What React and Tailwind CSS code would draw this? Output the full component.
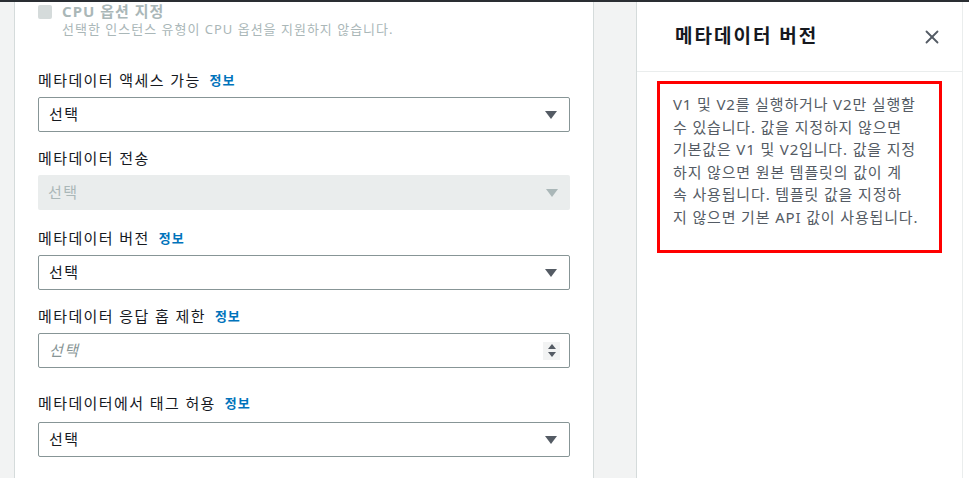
import { X } from 'lucide-react';

const Info = () => (
  <span className="ml-[9px] text-[13px] font-bold tracking-[1px] text-[#0073bb]">정보</span>
);

const Caret = ({ disabled }) => (
  <svg width="12" height="8" viewBox="0 0 12 8" className="shrink-0">
    <path d="M0 0 H12 L6 8 Z" fill={disabled ? '#aab7b8' : '#545b64'} />
  </svg>
);

const Select = ({ disabled }) => (
  <div
    className={`h-[35px] flex items-center justify-between pl-[10px] pr-[12px] rounded-[2px] ${
      disabled ? 'bg-[#eaeded] text-[#aab7b8]' : 'bg-white border border-[#879596] text-[#16191f]'
    }`}
  >
    <span className="text-[15px] tracking-[1.4px]">선택</span>
    <Caret disabled={disabled} />
  </div>
);

const Field = ({ label, info, className, gap = 'mt-[7px]', children }) => (
  <div className={className}>
    <div className="h-[20px] leading-[20px] text-[15px] tracking-[1.4px] text-[#16191f] flex items-center">
      <span>{label}</span>
      {info && <Info />}
    </div>
    <div className={gap}>{children}</div>
  </div>
);

export default function App() {
  return (
    <div className="w-[969px] h-[478px] overflow-hidden flex flex-col bg-[#f2f3f3] font-['Noto_Sans','Noto_Sans_CJK_KR',sans-serif]">
      <div className="h-[2px] bg-[#2a2e33] shrink-0" />
      <div className="flex flex-1 min-h-0">
        <div className="w-[14px] shrink-0" />

        {/* Form panel */}
        <div className="w-[580px] shrink-0 bg-white border-x border-[#d5dbdb] px-[23px]">
          <div className="flex items-start gap-[10px] pt-[2px]">
            <div className="w-[14px] h-[14px] mt-[1px] rounded-[2px] bg-[#d5dbdb]" />
            <div>
              <div className="text-[15px] font-bold leading-[14px] tracking-[1px] text-[#aab7b8]">CPU 옵션 지정</div>
              <div className="text-[13px] leading-[18px] mt-[2px] tracking-[1px] text-[#aab7b8]">
                선택한 인스턴스 유형이 CPU 옵션을 지원하지 않습니다.
              </div>
            </div>
          </div>

          <Field label="메타데이터 액세스 가능" info className="mt-[32px]">
            <Select />
          </Field>

          <Field label="메타데이터 전송" className="mt-[16px]">
            <Select disabled />
          </Field>

          <Field label="메타데이터 버전" info className="mt-[18px]">
            <Select />
          </Field>

          <Field label="메타데이터 응답 홉 제한" info className="mt-[16px]">
            <div className="h-[35px] flex items-center justify-between pl-[10px] pr-[9px] rounded-[2px] border border-[#879596] bg-white">
              <span className="text-[15px] italic tracking-[1.4px] text-[#879596]">선택</span>
              <div className="w-[17px] h-[18px] bg-[#f2f3f3] flex flex-col items-center justify-center gap-[3px]">
                <svg width="8" height="5" viewBox="0 0 8 5">
                  <path d="M0 5 H8 L4 0 Z" fill="#545b64" />
                </svg>
                <svg width="8" height="5" viewBox="0 0 8 5">
                  <path d="M0 0 H8 L4 5 Z" fill="#545b64" />
                </svg>
              </div>
            </div>
          </Field>

          <Field label="메타데이터에서 태그 허용" info className="mt-[25px]" gap="mt-[9px]">
            <Select />
          </Field>
        </div>

        <div className="w-[42px] shrink-0" />

        {/* Help panel */}
        <div className="w-[327px] shrink-0 bg-white border-l border-[#d5dbdb] border-r border-r-[#eaeded] flex flex-col">
          <div className="h-[70px] shrink-0 flex items-center justify-between pl-[38px] pr-[19px] border-b border-[#eaeded]">
            <h2 className="text-[19px] font-bold text-[#16191f] tracking-[2px]">메타데이터 버전</h2>
            <X size={22} strokeWidth={2} color="#545b64" />
          </div>
          <div className="mt-[9px] ml-[20px] w-[285px] h-[172px] border-[3px] border-[#ff0000] pl-[13px] pt-[9px]">
            <p className="text-[15px] leading-[22.6px] tracking-[0.85px] text-[#545b64]">
              <span className="block">V1 및 V2를 실행하거나 V2만 실행할</span>
              <span className="block">수 있습니다. 값을 지정하지 않으면</span>
              <span className="block">기본값은 V1 및 V2입니다. 값을 지정</span>
              <span className="block">하지 않으면 원본 템플릿의 값이 계</span>
              <span className="block">속 사용됩니다. 템플릿 값을 지정하</span>
              <span className="block">지 않으면 기본 API 값이 사용됩니다.</span>
            </p>
          </div>
        </div>
        <div className="flex-1 bg-white" />
      </div>
    </div>
  );
}
